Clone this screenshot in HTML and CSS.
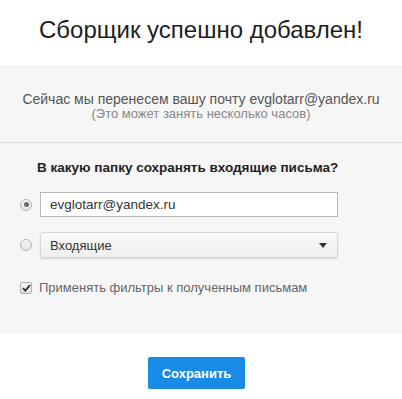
FILE: index.html
```html
<!DOCTYPE html>
<html lang="ru">
<head>
<meta charset="utf-8">
<link rel="stylesheet" href="styles.css">
</head>
<body>
<div class="page">
  <header class="head">
    <h1 class="title">Сборщик успешно добавлен!</h1>
  </header>
  <section class="info">
    <p class="info-main">Сейчас мы перенесем вашу почту evglotarr@yandex.ru</p>
    <p class="info-note">(Это может занять несколько часов)</p>
  </section>
  <section class="form">
    <h2 class="question">В какую папку сохранять входящие письма?</h2>
    <div class="row">
      <span class="radio radio-on"></span>
      <div class="field">evglotarr@yandex.ru</div>
    </div>
    <div class="row">
      <span class="radio"></span>
      <div class="select">
        <span>Входящие</span>
        <svg class="caret" width="8" height="5" viewBox="0 0 8 5"><path d="M0 0h8L4 5z" fill="#333"/></svg>
      </div>
    </div>
    <div class="check-row">
      <span class="checkbox">
        <svg width="9" height="8" viewBox="0 0 9 8"><path d="M1 4.2l2.3 2.5L8 1.2" fill="none" stroke="#333" stroke-width="1.8"/></svg>
      </span>
      <span class="check-label">Применять фильтры к полученным письмам</span>
    </div>
  </section>
  <footer class="foot">
    <button class="btn">Сохранить</button>
  </footer>
</div>
</body>
</html>
```

FILE: styles.css
```css
* { box-sizing: border-box; }
html, body { margin: 0; padding: 0; background: #fff; }
body { font-family: "Liberation Sans", Arial, sans-serif; color: #222; }
.page { width: 402px; }
.head { height: 65px; display: flex; align-items: center; justify-content: center; padding-bottom: 6px; }
.title { margin: 0; font-size: 24px; font-weight: normal; color: #1e1e1e; line-height: 28px; }
.info { background: #f6f6f6; padding: 26px 0 20px; text-align: center; border-bottom: 1px solid #dcdcdc; height: 78px; }
.info-main { margin: 0; font-size: 14px; line-height: 16px; color: #555; }
.info-note { margin: 0; font-size: 13px; line-height: 14px; color: #888; }
.form { background: #f6f6f6; padding: 16px 0 38px 20px; }
.question { margin: 0 0 16px 17px; font-size: 13.5px; font-weight: bold; line-height: 17px; color: #222; }
.row { display: flex; align-items: center; gap: 8px; margin-bottom: 15px; }
.radio { width: 12px; height: 12px; border-radius: 50%; border: 1px solid #b4b4b4; background: linear-gradient(#f8f8f8, #e2e2e2); display: flex; align-items: center; justify-content: center; }
.radio-on::after { content: ""; width: 5px; height: 5px; border-radius: 50%; background: #6a6a6a; }
.field { width: 298px; height: 25px; border: 1px solid #b8b8b8; background: #fff; font-size: 13.5px; color: #333; padding: 0 9px; display: flex; align-items: center; }
.select { width: 298px; height: 26px; border: 1px solid #d6d6d6; border-radius: 3px; background: linear-gradient(#fafafa, #efefef); box-shadow: 0 1px 2px rgba(0,0,0,0.12); font-size: 13px; color: #333; padding: 0 10px 0 9px; display: flex; align-items: center; justify-content: space-between; }
.caret { display: block; }
.check-row { display: flex; align-items: center; gap: 7px; margin-top: 22px; }
.checkbox { width: 12px; height: 12px; border: 1px solid #b0b0b0; border-radius: 2px; background: linear-gradient(#fafafa, #e0e0e0); display: flex; align-items: center; justify-content: center; }
.check-label { font-size: 13px; line-height: 15px; color: #666; }
.foot { padding: 24px 0 0 148px; }
.btn { width: 97px; height: 32px; border: none; border-radius: 2px; background: #1a8be4; color: #fff; font-family: "Liberation Sans", Arial, sans-serif; font-size: 13px; font-weight: bold; box-shadow: 0 1px 1px rgba(0,0,0,0.12); padding: 0; }
```
